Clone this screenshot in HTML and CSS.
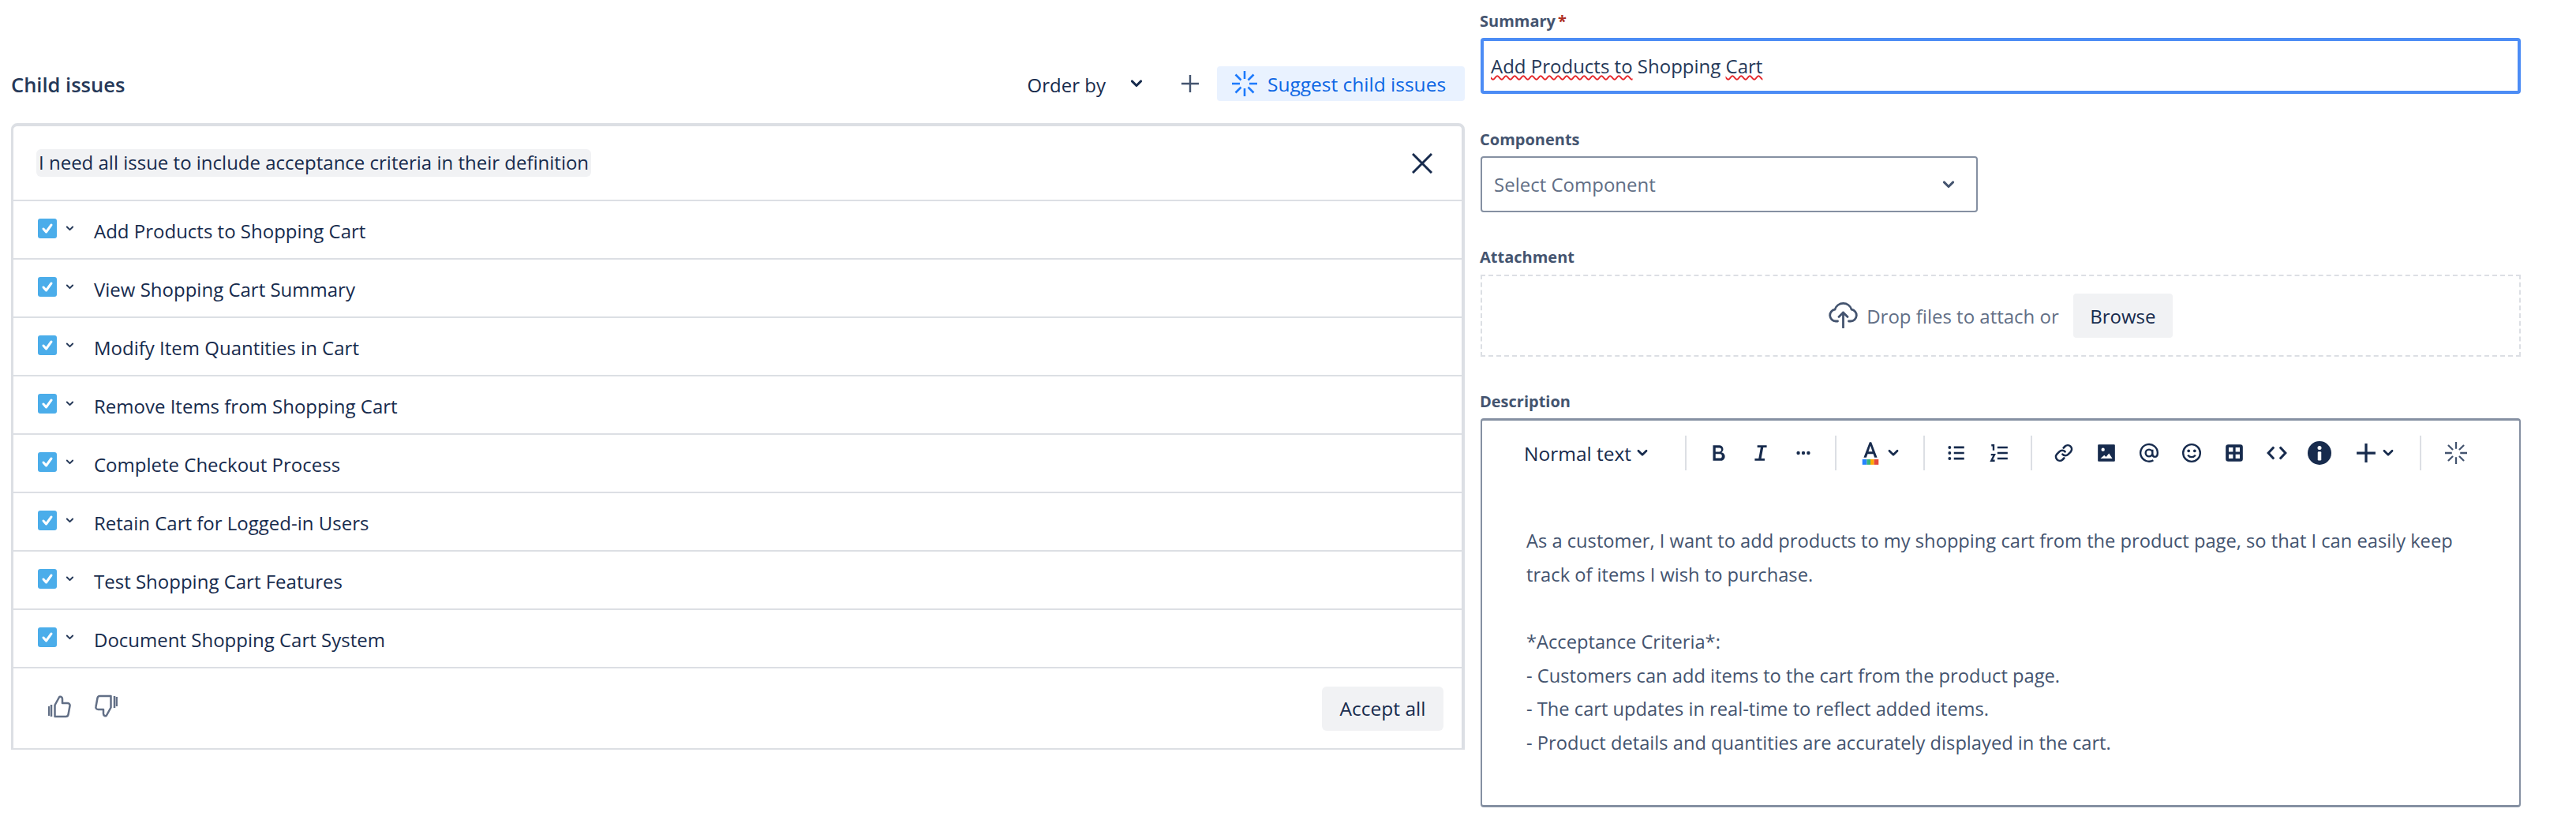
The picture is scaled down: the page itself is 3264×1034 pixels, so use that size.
FILE: index.html
```html
<!DOCTYPE html>
<html lang="en">
<head>
<meta charset="utf-8">
<title>Create issue</title>
<link rel="stylesheet" href="styles.css">
</head>
<body>
<svg class="defs" width="0" height="0" aria-hidden="true">
  <symbol id="spark" viewBox="0 0 32 32">
    <path d="M16 0v10M16 22v10M0 16h10M22 16h10M4.500 4.500l7 7M20.500 20.500l7 7M27.500 4.500l-7 7M11.500 20.500l-7 7" fill="none" stroke="currentColor" stroke-width="2.600"/>
  </symbol>
  <symbol id="chev" viewBox="0 0 16 16">
    <path d="M3.500 5.500L8 10l4.500-4.500" fill="none" stroke="currentColor" stroke-width="2.400" stroke-linecap="round" stroke-linejoin="round"/>
  </symbol>
  <symbol id="tick" viewBox="0 0 24 24">
    <path d="M7 12.500l3.500 4 6.500-9" fill="none" stroke="#fff" stroke-width="3" stroke-linecap="round" stroke-linejoin="round"/>
  </symbol>
</svg>
<main class="page">
  <section class="left">
    <header class="left-head">
      <h2 class="left-title">Child issues</h2>
      <span class="order">Order by</span>
      <svg class="order-chev"><use href="#chev"/></svg>
      <svg class="plus" viewBox="0 0 22 22"><path d="M11 0v22M0 11h22" stroke="currentColor" stroke-width="2.400"/></svg>
      <button class="suggest"><svg class="suggest-icon"><use href="#spark"/></svg>Suggest child issues</button>
    </header>
    <div class="panel">
      <div class="panel-head">
        <span class="prompt">I need all issue to include acceptance criteria in their definition</span>
        <svg class="close" viewBox="0 0 26 26"><path d="M1 1l24 24M25 1L1 25" stroke="currentColor" stroke-width="3"/></svg>
      </div>
      <div class="row"><span class="check"><svg><use href="#tick"/></svg></span><svg class="row-chev"><use href="#chev"/></svg><span class="row-text">Add Products to Shopping Cart</span></div>
      <div class="row"><span class="check"><svg><use href="#tick"/></svg></span><svg class="row-chev"><use href="#chev"/></svg><span class="row-text">View Shopping Cart Summary</span></div>
      <div class="row"><span class="check"><svg><use href="#tick"/></svg></span><svg class="row-chev"><use href="#chev"/></svg><span class="row-text">Modify Item Quantities in Cart</span></div>
      <div class="row"><span class="check"><svg><use href="#tick"/></svg></span><svg class="row-chev"><use href="#chev"/></svg><span class="row-text">Remove Items from Shopping Cart</span></div>
      <div class="row"><span class="check"><svg><use href="#tick"/></svg></span><svg class="row-chev"><use href="#chev"/></svg><span class="row-text">Complete Checkout Process</span></div>
      <div class="row"><span class="check"><svg><use href="#tick"/></svg></span><svg class="row-chev"><use href="#chev"/></svg><span class="row-text">Retain Cart for Logged-in Users</span></div>
      <div class="row"><span class="check"><svg><use href="#tick"/></svg></span><svg class="row-chev"><use href="#chev"/></svg><span class="row-text">Test Shopping Cart Features</span></div>
      <div class="row"><span class="check"><svg><use href="#tick"/></svg></span><svg class="row-chev"><use href="#chev"/></svg><span class="row-text">Document Shopping Cart System</span></div>
      <div class="panel-foot">
        <svg class="thumb" viewBox="0 0 30 30"><path d="M8.500 13.500L14 3.500c1-1.500 4-.5 4 2V11h6.500c2 0 3.500 1.500 3 3.500l-2 11c-.3 1.500-1.500 2.500-3 2.500H8.500zM4 13v15M0.800 15v12" fill="none" stroke="currentColor" stroke-width="2.500" stroke-linejoin="round"/></svg>
        <svg class="thumb thumb-down" viewBox="0 0 30 30"><path d="M21.500 16.500L16 26.500c-1 1.500-4 .5-4-2V19H5.500c-2 0-3.500-1.500-3-3.500l2-11C4.800 3 6 2 7.500 2h14zM26 2v15M29 3v12" fill="none" stroke="currentColor" stroke-width="2.500" stroke-linejoin="round"/></svg>
        <button class="accept">Accept all</button>
      </div>
    </div>
  </section>

  <section class="right">
    <label class="label">Summary<span class="req">*</span></label>
    <div class="summary"><span class="typo">Add Products to</span> Shopping <span class="typo">Cart</span></div>

    <label class="label label-components">Components</label>
    <div class="select">
      <span>Select Component</span>
      <svg class="select-chev"><use href="#chev"/></svg>
    </div>

    <label class="label label-attachment">Attachment</label>
    <div class="drop">
      <svg class="cloud" viewBox="0 0 36 34"><path d="M11 25H8.500a7.500 7.500 0 0 1-1-14.900 11 11 0 0 1 21 0 7.500 7.500 0 0 1-1 14.900H25M18 33V14M12.500 19.500L18 14l5.500 5.500" fill="none" stroke="currentColor" stroke-width="2.800" stroke-linecap="round" stroke-linejoin="round"/></svg>
      <span class="drop-text">Drop files to attach or</span>
      <button class="browse">Browse</button>
    </div>

    <label class="label label-description">Description</label>
    <div class="editor">
      <div class="toolbar">
        <span class="tb-style">Normal text<svg class="tb-chev"><use href="#chev"/></svg></span>
        <i class="sep"></i>
        <span class="tb"><svg viewBox="0 0 24 24" class="ico"><path d="M6 3h7.500a4.500 4.500 0 0 1 2.500 8.200A5 5 0 0 1 14 21H6zM9 6v4.500h4.500a2.250 2.250 0 0 0 0-4.500zM9 13.200V18h5a2.400 2.400 0 0 0 0-4.800z" fill="currentColor" fill-rule="evenodd"/></svg></span>
        <span class="tb"><svg viewBox="0 0 24 24" class="ico"><path d="M8 3h11v2.600h-4L12.600 18.400h4V21H5v-2.600h4.500L11.900 5.600H8z" fill="currentColor"/></svg></span>
        <span class="tb"><svg viewBox="0 0 24 24" class="ico-sm"><circle cx="5" cy="12" r="2.400" fill="currentColor"/><circle cx="12" cy="12" r="2.400" fill="currentColor"/><circle cx="19" cy="12" r="2.400" fill="currentColor"/></svg></span>
        <i class="sep"></i>
        <span class="tb tb-wide"><svg viewBox="0 0 24 28" class="ico-a"><path d="M4.500 19L11 2h2l6.500 17h-3l-1.400-4H8.900l-1.400 4zM9.800 12.500h4.400L12 6z" fill="currentColor" fill-rule="evenodd"/><rect x="3" y="21" width="5" height="6" fill="#2684ff"/><rect x="8" y="21" width="4" height="6" fill="#36b37e"/><rect x="12" y="21" width="4" height="6" fill="#ffab00"/><rect x="16" y="21" width="5" height="6" fill="#e5493a"/></svg><svg class="tb-chev"><use href="#chev"/></svg></span>
        <i class="sep"></i>
        <span class="tb"><svg viewBox="0 0 24 24" class="ico"><path d="M9 5.500h12M9 12h12M9 18.500h12" stroke="currentColor" stroke-width="2.500"/><circle cx="4" cy="5.500" r="1.800" fill="currentColor"/><circle cx="4" cy="12" r="1.800" fill="currentColor"/><circle cx="4" cy="18.500" r="1.800" fill="currentColor"/></svg></span>
        <span class="tb"><svg viewBox="0 0 24 24" class="ico"><path d="M10 5.500h12M10 12h12M10 18.500h12M3 3h2.500v6M2.500 14h4L3 21h4" fill="none" stroke="currentColor" stroke-width="2.200"/></svg></span>
        <i class="sep"></i>
        <span class="tb"><svg viewBox="0 0 24 24" class="ico"><path d="M10.500 13.500a4.500 4.500 0 0 0 6.500.2l3-3a4.600 4.600 0 0 0-6.500-6.500l-1.800 1.800M13.500 10.500a4.500 4.500 0 0 0-6.500-.2l-3 3a4.600 4.600 0 0 0 6.500 6.500l1.800-1.800" fill="none" stroke="currentColor" stroke-width="2.400" stroke-linecap="round"/></svg></span>
        <span class="tb"><svg viewBox="0 0 24 24" class="ico"><path d="M3 2h18a1 1 0 0 1 1 1v18a1 1 0 0 1-1 1H3a1 1 0 0 1-1-1V3a1 1 0 0 1 1-1zM5 18.500h14l-4-6-3.500 4-2-2z" fill="currentColor" fill-rule="evenodd"/><circle cx="8" cy="8" r="2" fill="#fff"/></svg></span>
        <span class="tb"><svg viewBox="0 0 24 24" class="ico"><path d="M17 20.500A10 10 0 1 1 22 12c0 2.500-1 4.500-3.200 4.500S16 14.800 16 13V8M16 12a4 4 0 1 1-8 0 4 4 0 0 1 8 0z" fill="none" stroke="currentColor" stroke-width="2.200"/></svg></span>
        <span class="tb"><svg viewBox="0 0 24 24" class="ico"><circle cx="12" cy="12" r="10" fill="none" stroke="currentColor" stroke-width="2.200"/><circle cx="8.500" cy="9.500" r="1.700" fill="currentColor"/><circle cx="15.500" cy="9.500" r="1.700" fill="currentColor"/><path d="M7.500 14.500c2.500 3 6.500 3 9 0" fill="none" stroke="currentColor" stroke-width="2.200"/></svg></span>
        <span class="tb"><svg viewBox="0 0 24 24" class="ico"><path d="M5 2h14a3 3 0 0 1 3 3v14a3 3 0 0 1-3 3H5a3 3 0 0 1-3-3V5a3 3 0 0 1 3-3zM5.500 5.500v5h5v-5zM13.500 5.500v5h5v-5zM5.500 13.500v5h5v-5zM13.500 13.500v5h5v-5z" fill="currentColor" fill-rule="evenodd"/></svg></span>
        <span class="tb"><svg viewBox="0 0 24 24" class="ico"><path d="M8.500 5L2 12l6.500 7M15.500 5L22 12l-6.500 7" fill="none" stroke="currentColor" stroke-width="2.800"/></svg></span>
        <span class="tb"><svg viewBox="0 0 24 24" class="ico-lg"><circle cx="12" cy="12" r="12" fill="currentColor"/><circle cx="12" cy="6.800" r="2" fill="#fff"/><rect x="10.200" y="10.500" width="3.600" height="9" rx="1" fill="#fff"/></svg></span>
        <span class="tb tb-plus"><svg viewBox="0 0 24 24" class="ico"><path d="M12 1v22M1 12h22" stroke="currentColor" stroke-width="3"/></svg><svg class="tb-chev"><use href="#chev"/></svg></span>
        <i class="sep"></i>
        <span class="tb tb-ai"><svg class="ai"><use href="#spark"/></svg></span>
      </div>
      <div class="desc">
        <p>As a customer, I want to add products to my shopping cart from the product page, so that I can easily keep track of items I wish to purchase.</p>
        <p class="gap">*Acceptance Criteria*:</p>
        <p>- Customers can add items to the cart from the product page.</p>
        <p>- The cart updates in real-time to reflect added items.</p>
        <p>- Product details and quantities are accurately displayed in the cart.</p>
      </div>
    </div>
  </section>
</main>
</body>
</html>
```
FILE: styles.css
```css
* { box-sizing: border-box; }
html, body { margin: 0; padding: 0; background: #fff; }
body {
  font-family: "Open Sans", "Noto Sans", sans-serif;
  font-size: 24px;
  color: #172b4d;
  width: 3264px;
  height: 1034px;
  overflow: hidden;
}
.defs { position: absolute; }
p, h2 { margin: 0; }
button { font: inherit; border: 0; color: inherit; padding: 0; }

.page { display: flex; gap: 20px; padding-left: 14px; align-items: flex-start; }

/* left */
.left { width: 1842px; padding-top: 84px; flex: none; }
.left-head { display: flex; align-items: center; height: 44px; margin-bottom: 28px; }
.left-title { font-size: 25.500px; font-weight: 600; color: #253858; margin-right: auto; position: relative; top: 1px; }
.order { position: relative; top: 1px; }
.order-chev { width: 20px; height: 20px; margin-left: 29px; }
.plus { width: 22px; height: 22px; margin-left: 47px; margin-right: 23px; color: #44546f; }
.suggest {
  display: flex; align-items: center; gap: 13px;
  width: 314px; height: 44px; padding-left: 19px;
  background: #e9f2ff; color: #0c66e4; border-radius: 4px; font-size: 24.500px; font-weight: 500;
}
.suggest-icon { width: 32px; height: 32px; color: #1d7afc; }

.panel {
  border-style: solid; border-color: #dcdfe4;
  border-width: 4px 4px 2px 3px;
  border-radius: 8px 8px 0 0;
}
.panel-head {
  display: flex; align-items: center; justify-content: space-between;
  height: 95px; padding: 0 37px 0 29px;
  border-bottom: 2px solid #dcdfe4;
}
.prompt { background: #f1f2f4; border-radius: 6px; height: 35px; line-height: 34px; padding: 0 3px; }
.close { width: 26px; height: 26px; }
.row {
  display: flex; align-items: center;
  height: 74px; padding: 0 0 0 31px;
  border-bottom: 2px solid #dcdfe4;
}
.check { width: 24px; height: 25px; border-radius: 3px; background: #4badea; margin-top: -4px; display: flex; }
.check svg { width: 24px; height: 25px; }
.row-chev { width: 13px; height: 13px; margin-left: 10px; margin-top: -4px; color: #253858; }
.row-text { margin-left: 24px; position: relative; top: 1px; }
.panel-foot {
  display: flex; align-items: center;
  height: 101px; padding: 0 23px 0 44px;
}
.thumb { width: 30px; height: 30px; color: #626f86; margin-top: -6px; }
.thumb-down { margin-left: 28px; margin-right: auto; }
.accept { width: 154px; height: 56px; background: #f1f2f4; border-radius: 6px; font-size: 24.500px; font-weight: 500; }

/* right */
.right { width: 1318px; flex: none; padding-top: 13px; }
.label { display: block; font-size: 20px; line-height: 28px; font-weight: 700; color: #44546f; margin-left: -1px; }
.req { color: #ae2e24; margin-left: 3px; }
.summary {
  height: 71px; margin-top: 7px; padding-left: 9px;
  border: 4px solid #4c8cf5; border-radius: 4px;
  display: block; line-height: 63px; color: #253858;
}
.typo { text-decoration: underline wavy #e5262a 2px; text-underline-offset: 2px; text-decoration-skip-ink: none; }
.label-components { margin-top: 44px; }
.select {
  width: 630px; height: 71px; margin-top: 7px; padding: 0 25px 0 15px;
  border: 2px solid #8590a2; border-radius: 4px;
  display: flex; align-items: center; justify-content: space-between; color: #626f86;
}
.select-chev { width: 20px; height: 20px; color: #44546f; }
.label-attachment { margin-top: 43px; }
.drop {
  height: 104px; margin-top: 8px;
  border: 2px dashed #dcdfe4;
  display: flex; align-items: center; justify-content: center;
}
.cloud { width: 37px; height: 34px; color: #44546f; margin-top: -3px; }
.drop-text { margin-left: 11px; color: #626f86; }
.browse { width: 126px; height: 56px; margin-left: 18px; background: #f1f2f4; border-radius: 4px; font-weight: 500; }
.label-description { margin-top: 43px; }
.editor {
  height: 493px; margin-top: 7px;
  border: 2px solid #8590a2; border-top-width: 3px; border-bottom-width: 3px;
  border-radius: 4px;
}
.toolbar { display: flex; align-items: center; height: 44px; margin-top: 19px; padding-left: 53px; color: #172b4d; }
.tb-style { display: flex; align-items: center; gap: 5px; width: 191px; font-size: 24.500px; }
.tb { display: flex; align-items: center; justify-content: center; width: 54px; flex: none; }
.tb-wide { width: 84px; gap: 6px; }
.tb-plus { width: 87px; gap: 6px; }
.tb-ai { width: 62px; }
.sep { width: 2px; height: 44px; background: #dcdfe4; margin: 0 13px; flex: none; }
.tb-chev { width: 18px; height: 18px; flex: none; }
.ico { width: 26px; height: 26px; }
.ico-sm { width: 22px; height: 22px; }
.ico-lg { width: 30px; height: 30px; }
.ico-a { width: 28px; height: 32px; }
.ai { width: 28px; height: 28px; color: #44546f; }
.desc { padding: 0 60px 0 56px; margin-top: 68px; font-size: 23.700px; line-height: 42.600px; color: #44546f; }
.gap { margin-top: 43px; }
```
